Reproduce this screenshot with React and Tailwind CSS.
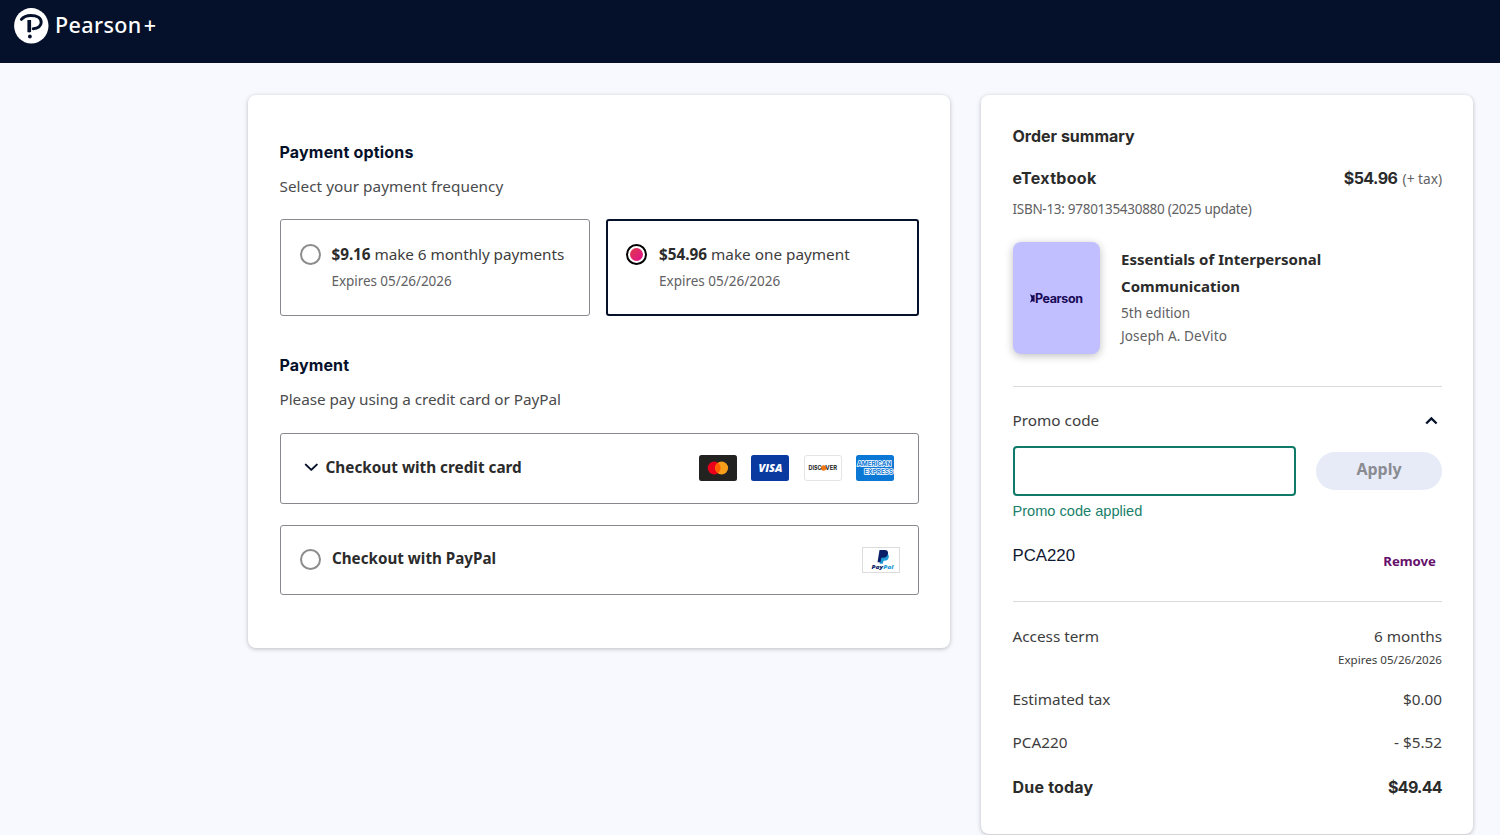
import React from "react";

const Radio = ({ checked }) => (
  <span className={`flex w-[21px] h-[21px] shrink-0 items-center justify-center rounded-full border-2 bg-white ${checked ? "border-black" : "border-[#8c8c8c]"}`}>
    {checked && <span className="w-[13px] h-[13px] rounded-full bg-gradient-to-br from-[#e03545] to-[#e0008c]" />}
  </span>
);

const PearsonMark = () => (
  <svg width="35" height="36" viewBox="0 0 35 36">
    <ellipse cx="17.3" cy="17.8" rx="17.2" ry="17.7" fill="#fff" />
    <path d="M7.4 11.4C9.4 8.800 12.800 7.400 16.800 7.400c6.200 0 10.400 2.600 10.400 6.900 0 3.800-3.200 6.200-8 6.400" fill="none" stroke="#05112a" strokeWidth="3" strokeLinecap="round" />
    <path d="M13.4 12h3.700v11.800c-1.100 1-2.500 1-3.700.3z" fill="#05112a" />
    <circle cx="15.900" cy="28.500" r="1.900" fill="#05112a" />
  </svg>
);

const Mastercard = () => (
  <svg width="38" height="26" viewBox="0 0 38 26">
    <rect width="38" height="26" rx="2.5" fill="#222221" />
    <circle cx="15.2" cy="13" r="6.5" fill="#eb001b" />
    <circle cx="22.6" cy="13" r="6.5" fill="#f79e1b" />
    <path d="M18.9 7.7a6.5 6.5 0 0 1 0 10.6a6.5 6.5 0 0 1 0-10.6z" fill="#ff5f00" />
  </svg>
);

const Visa = () => (
  <svg width="38" height="26" viewBox="0 0 38 26">
    <rect width="38" height="26" rx="2.5" fill="#0a3a9f" />
    <text x="19.5" y="17.2" textAnchor="middle" textLength="24" lengthAdjust="spacingAndGlyphs" fontFamily="Open Sans, sans-serif" fontSize="11.2" fontWeight="800" fontStyle="italic" fill="#fff">VISA</text>
  </svg>
);

const Discover = () => (
  <svg width="38" height="26" viewBox="0 0 38 26">
    <rect x="0.5" y="0.5" width="37" height="25" rx="2.5" fill="#fff" stroke="#e4e4e4" />
    <circle cx="19.6" cy="13" r="2.7" fill="#f27712" />
    <text x="4.5" y="15.3" textLength="13" lengthAdjust="spacingAndGlyphs" fontFamily="Inter, sans-serif" fontSize="6.2" fontWeight="700" fill="#222">DISC</text>
    <text x="21.3" y="15.3" textLength="11.8" lengthAdjust="spacingAndGlyphs" fontFamily="Inter, sans-serif" fontSize="6.2" fontWeight="700" fill="#222">VER</text>
  </svg>
);

const Amex = () => (
  <svg width="38" height="26" viewBox="0 0 38 26" className="overflow-visible">
    <rect width="38" height="26" rx="2.5" fill="#0a78d4" />
    <g fontFamily="Inter, sans-serif" fontSize="6.6" fontWeight="700" fill="#0a78d4" stroke="#fff" strokeWidth="1.5" paintOrder="stroke">
      <text x="1.2" y="11.4" textLength="34" lengthAdjust="spacingAndGlyphs">AMERICAN</text>
      <text x="8.2" y="19.2" textLength="29" lengthAdjust="spacingAndGlyphs">EXPRESS</text>
    </g>
  </svg>
);

const PayPal = () => (
  <svg width="38" height="26" viewBox="0 0 38 26">
    <rect x="0.5" y="0.5" width="37" height="25" fill="#fff" stroke="#dcdcdc" />
    <path d="M19 6.5h5.5c2 .6 2.6 2 2.2 3.9-.5 2.4-2 3.3-4.2 3.3h-1l-.7 3h-3.2z" fill="#1f9ad6" />
    <path d="M17.5 3h5.2c2.6 0 3.7 1.4 3.3 3.7-.5 2.9-2.4 4-5 4h-1.7l-.8 4.5h-3z" fill="#0b1f69" />
    <text x="9.5" y="22.3" fontFamily="Open Sans, sans-serif" fontSize="5.8" fontWeight="800" fontStyle="italic" textLength="22" lengthAdjust="spacingAndGlyphs">
      <tspan fill="#0b1f69">Pay</tspan><tspan fill="#1f9ad6">Pal</tspan>
    </text>
  </svg>
);

const ChevronDown = () => (
  <svg width="14" height="10" viewBox="0 0 14 10" fill="none" stroke="#05112a" strokeWidth="2" strokeLinecap="round" strokeLinejoin="round">
    <path d="M1.8 1.6L7.300 6.900L12.800 1.600" />
  </svg>
);

const ChevronUp = () => (
  <svg width="14" height="10" viewBox="0 0 14 10" fill="none" stroke="#05112a" strokeWidth="2.3">
    <path d="M2.2 8.5L7.4 3.4L12.6 8.5" />
  </svg>
);

const PaymentOption = ({ amount, label, checked, className }) => (
  <div className={`flex h-[97px] rounded-[3px] ${className}`}>
    <Radio checked={checked} />
    <div className="-mt-[2px]">
      <p className="text-[15.3px] leading-6 text-[#3d3d3d]">
        <span className="font-bold text-[#2b2b2b]">{amount}</span> {label}
      </p>
      <p className="mt-[3px] text-[13.5px] leading-6 text-[#5f6163]">Expires 05/26/2026</p>
    </div>
  </div>
);

const PaymentPanel = () => (
  <section className="h-[553px] w-[702px] rounded-lg bg-white pt-[45px] pr-[31.5px] pl-[31.5px] shadow-[0_1px_4px_rgba(0,0,0,0.25)]">
    <h2 className="font-['Inter'] text-base leading-6 font-bold tracking-[0.18px] text-[#05112a]">Payment options</h2>
    <p className="mt-[10px] text-[15.3px] leading-6 tracking-[0.03px] text-[#4a4b4d]">Select your payment frequency</p>
    <div className="mt-[21px] flex gap-4">
      <PaymentOption amount="$9.16" label="make 6 monthly payments" className="w-[310px] gap-[11px] border border-[#87898e] px-[19px] py-6 tracking-[-0.06px]" />
      <PaymentOption amount="$54.96" label="make one payment" checked className="w-[313px] gap-3 border-2 border-[#05112a] px-[18.5px] py-[23px]" />
    </div>
    <h2 className="mt-[37px] font-['Inter'] text-base leading-6 font-bold tracking-[0.12px] text-[#05112a]">Payment</h2>
    <p className="mt-[10px] text-[15.3px] leading-6 tracking-[-0.05px] text-[#4a4b4d]">Please pay using a credit card or PayPal</p>
    <div className="mt-[22px] flex h-[71px] items-center rounded-[3px] border border-[#87898e] pr-[23.5px] pb-[2px] pl-[23px]">
      <ChevronDown />
      <span className="ml-2 text-[15.3px] font-bold text-[#2b2b2b]">Checkout with credit card</span>
      <div className="mt-[1px] ml-auto flex gap-[14.4px]">
        <Mastercard />
        <Visa />
        <Discover />
        <Amex />
      </div>
    </div>
    <div className="mt-[21px] flex h-[70px] items-center rounded-[3px] border border-[#87898e] pr-[18px] pl-[19px]">
      <span className="mb-[1px]"><Radio /></span>
      <span className="mb-[3px] ml-[11.5px] text-[15.2px] font-bold text-[#2b2b2b]">Checkout with PayPal</span>
      <div className="ml-auto">
        <PayPal />
      </div>
    </div>
  </section>
);

const SummaryRow = ({ label, value, note, className = "" }) => (
  <div className={`flex justify-between text-[15.3px] leading-6 text-[#3d3d3d] ${className}`}>
    <span>{label}</span>
    <div className="text-right">
      <p>{value}</p>
      {note && <p className="text-[11.6px] leading-[23px]">{note}</p>}
    </div>
  </div>
);

const OrderSummary = () => (
  <section className="h-[739px] w-[492px] rounded-lg bg-white pt-[29px] pr-[31px] pl-[31.5px] shadow-[0_1px_4px_rgba(0,0,0,0.25)]">
    <h2 className="font-['Inter'] text-base leading-6 font-bold text-[#2b2b2b]">Order summary</h2>
    <div className="mt-[18px] flex items-baseline justify-between">
      <h3 className="font-['Inter'] text-base leading-6 font-bold tracking-[0.3px] text-[#2b2b2b]">eTextbook</h3>
      <p className="leading-6">
        <span className="mr-[1px] font-['Inter'] text-base font-bold tracking-[-0.55px] text-[#2b2b2b]">$54.96</span> <span className="text-[13.7px] text-[#5f6163]">(+ tax)</span>
      </p>
    </div>
    <p className="mt-[6px] text-[13.5px] leading-6 tracking-[-0.29px] text-[#5f6163]">ISBN-13: 9780135430880 (2025 update)</p>

    <div className="mt-[21px] flex gap-[21px]">
      <div className="flex h-[112px] w-[87.5px] items-center justify-center rounded-lg bg-[#c1bfff] shadow-[0_2px_8px_rgba(0,0,0,0.25)]">
        <svg width="5" height="9" viewBox="0 0 5 9" fill="#190a58">
          <path d="M0 0L2.4 1.5L4.6 0.8V8L2.4 7.3L0 8.8L1.5 4.4z" />
        </svg>
        <span className="pt-[2px] font-['Inter'] text-[12.5px] font-bold tracking-[-0.4px] text-[#190a58]">Pearson</span>
      </div>
      <div className="pt-1 text-[13.6px] leading-[23px] text-[#5f6163]">
        <h4 className="mb-[1px] text-[15px] leading-[27px] font-bold text-[#2b2b2b]">
          Essentials of Interpersonal
          <br />
          Communication
        </h4>
        <p>5th edition</p>
        <p className="tracking-[0.08px]">Joseph A. DeVito</p>
      </div>
    </div>

    <div className="mt-8 border-t border-[#d9dadc] pt-[21px]">
      <div className="flex items-center justify-between pr-1 text-[15.3px] leading-6 text-[#3d3d3d]">
        <span>Promo code</span>
        <ChevronUp />
      </div>
      <div className="mt-[14px] flex items-center justify-between">
        <input className="h-[50px] w-[283px] rounded border-2 border-[#0f7a68] bg-white px-3" />
        <button className="mb-[1px] h-[38px] w-[126px] rounded-full bg-[#e7ebf8] pb-[3px] text-base font-bold text-[#8a8c92]">Apply</button>
      </div>
      <p className="mt-[3px] font-['Liberation_Sans'] text-[14.6px] leading-6 text-[#1a7f6b]">Promo code applied</p>
      <div className="mt-[21px] flex justify-between pr-[6px]">
        <span className="font-['Liberation_Sans'] text-[16.8px] leading-6 text-[#0f1830]">PCA220</span>
        <button className="mt-[5px] text-[13.2px] leading-6 font-bold text-[#66106b]">Remove</button>
      </div>
    </div>

    <div className="mt-[28px] border-t border-[#d9dadc] pt-[22px]">
      <SummaryRow label="Access term" value="6 months" note="Expires 05/26/2026" />
      <SummaryRow label="Estimated tax" value="$0.00" className="mt-4" />
      <SummaryRow label="PCA220" value="- $5.52" className="mt-[19px]" />
      <div className="mt-[21px] flex justify-between font-['Inter'] text-base leading-6 font-bold text-[#2b2b2b]">
        <span className="tracking-[0.2px]">Due today</span>
        <span className="tracking-[-0.7px]">$49.44</span>
      </div>
    </div>
  </section>
);

const App = () => {
  return (
    <div className="h-screen overflow-hidden bg-[#f8f9fe] font-['Noto_Sans',sans-serif]">
      <header className="flex h-[63px] bg-[#05112a] pt-2 pl-[14px]">
        <PearsonMark />
        <span className="ml-[6px] font-['Noto_Sans'] text-[21.5px] leading-[34px] font-medium tracking-[0.4px] text-white">
          Pearson<span className="ml-[2px]">+</span>
        </span>
      </header>
      <main className="flex items-start gap-[31px] pt-8 pl-[248px]">
        <PaymentPanel />
        <OrderSummary />
      </main>
    </div>
  );
};

export default App;
